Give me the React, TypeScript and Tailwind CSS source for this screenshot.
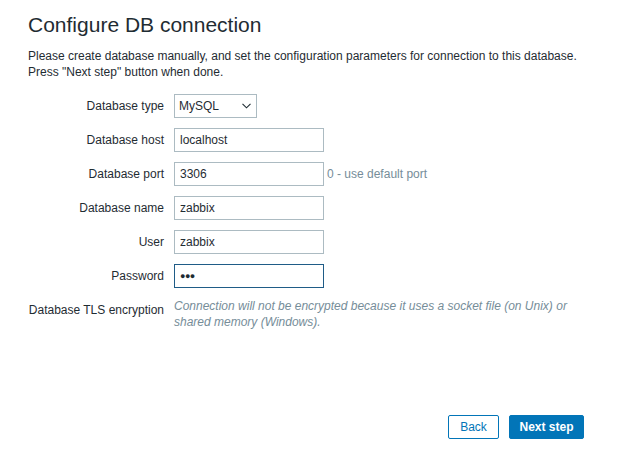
import { useState } from 'react';

const inputCls =
  'h-6 w-[150px] border border-[#acbbc2] bg-white px-[5px] text-[12px] leading-[16px] text-[#1f2c33] outline-none';

function Row({ label, children }: { label: string; children: React.ReactNode }) {
  return (
    <>
      <div className="pt-1 text-right leading-4 whitespace-nowrap">{label}</div>
      <div className="flex items-center">{children}</div>
    </>
  );
}

export default function App() {
  const [host, setHost] = useState('localhost');
  const [port, setPort] = useState('3306');
  const [name, setName] = useState('zabbix');
  const [user, setUser] = useState('zabbix');

  return (
    <div className="flex h-[462px] w-[618px] flex-col bg-white pl-7 pr-[34px] font-['Liberation_Sans',Arial,sans-serif] text-[12px] text-[#1f2c33]">
      <h1 className="pt-[13px] text-[21px] leading-6 font-normal">Configure DB connection</h1>
      <p className="mt-[11px] leading-4">
        Please create database manually, and set the configuration parameters for connection to this database.
        <br />
        Press "Next step" button when done.
      </p>

      <div className="mt-[14px] grid grid-cols-[136px_auto] gap-x-[10px] gap-y-[10px]">
        <Row label="Database type">
          <div className="flex h-6 w-[83px] items-center justify-between border border-[#acbbc2] bg-white pr-[5px] pl-[4px]">
            <span className="leading-4">MySQL</span>
            <svg width="9" height="6" viewBox="0 0 9 6" fill="none">
              <path d="M0.5 0.8 L4.5 4.8 L8.5 0.8" stroke="#1f2c33" strokeWidth="1.1" />
            </svg>
          </div>
        </Row>
        <Row label="Database host">
          <input className={inputCls} value={host} onChange={(e) => setHost(e.target.value)} />
        </Row>
        <Row label="Database port">
          <input className={inputCls} value={port} onChange={(e) => setPort(e.target.value)} />
          <span className="ml-[3px] text-[#768d99]">0 - use default port</span>
        </Row>
        <Row label="Database name">
          <input className={inputCls} value={name} onChange={(e) => setName(e.target.value)} />
        </Row>
        <Row label="User">
          <input className={inputCls} value={user} onChange={(e) => setUser(e.target.value)} />
        </Row>
        <Row label="Password">
          <div className="flex h-6 w-[150px] items-center border border-[#1f5c87] bg-white px-[5px]">
            <span className="text-[9px] leading-none font-bold tracking-[-0.5px]">●●●</span>
          </div>
        </Row>
        <div className="pt-1 text-right leading-4 whitespace-nowrap">Database TLS encryption</div>
        <p className="leading-4 text-[#768d99] italic">
          Connection will not be encrypted because it uses a socket file (on Unix) or
          <br />
          shared memory (Windows).
        </p>
      </div>

      <div className="mt-auto mb-[23px] flex justify-end gap-[10px]">
        <button className="h-6 w-[51px] rounded-[2px] border border-[#0275b8] bg-white text-[12px] text-[#0275b8]">
          Back
        </button>
        <button className="h-6 w-[75px] rounded-[2px] border border-[#0275b8] bg-[#0275b8] text-[12px] font-bold text-white">
          Next step
        </button>
      </div>
    </div>
  );
}
